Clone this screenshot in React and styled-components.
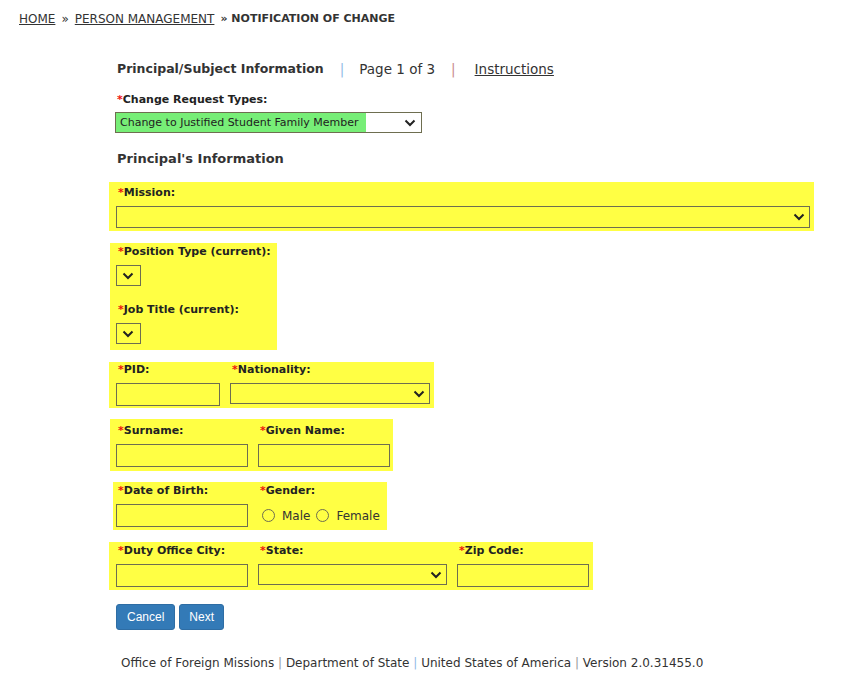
import styled, { createGlobalStyle } from "styled-components";

const GlobalStyle = createGlobalStyle`
  body {
    margin: 0;
    background: #ffffff;
    color: #333333;
    font-family: "DejaVu Sans", Verdana, sans-serif;
  }
`;

const Page = styled.div`
  width: 846px;
  height: 684px;
  overflow: hidden;
`;

const Breadcrumb = styled.div`
  padding: 12px 0 0 19px;
  font-size: 12px;
  line-height: 14px;
  color: #333333;
  display: flex;
  gap: 6px;
`;

const CrumbLink = styled.a`
  color: #333333;
  text-decoration: underline;
`;

const CrumbCurrent = styled.span`
  font-weight: bold;
  font-size: 11px;
`;

const Form = styled.div`
  margin-left: 109px;
  padding-top: 33px;
`;

const TitleRow = styled.div`
  display: flex;
  align-items: center;
  padding-left: 8px;
  font-size: 13.5px;
  line-height: 20px;
`;

const TitleText = styled.span`
  font-weight: bold;
  font-size: 12.5px;
`;

const Sep = styled.span`
  color: ${(p) => p.$color};
  margin: 0 ${(p) => p.$mr}px 0 ${(p) => p.$ml}px;
`;

const InstrLink = styled.a`
  color: #333333;
  text-decoration: underline;
`;

const TypeBlock = styled.div`
  padding: 14px 0 0 6px;
`;

const Label = styled.div`
  font-size: 11px;
  font-weight: bold;
  line-height: 14px;
  color: #222222;
  white-space: nowrap;
  margin-bottom: ${(p) => p.$gap ?? 6}px;
  padding-left: 2px;
`;

const Star = styled.span`
  color: #ee1111;
`;

const SelectWrap = styled.div`
  position: relative;
  width: ${(p) => p.$w}px;
  height: ${(p) => p.$h || 22}px;
  border: 1px solid #6e6e50;
  box-sizing: border-box;
  display: flex;
  align-items: center;
  font-size: 11px;
`;

const Chevron = styled.svg`
  position: absolute;
  right: ${(p) => p.$right || 4}px;
  top: 50%;
  transform: translateY(-50%);
`;

const Highlight = styled.span`
  background: #77ee77;
  align-self: stretch;
  display: flex;
  align-items: center;
  padding-left: 4px;
  width: 246px;
  color: #222222;
`;

const SectionTitle = styled.div`
  font-size: 13px;
  font-weight: bold;
  line-height: 18px;
  padding: 17px 0 0 8px;
  margin-bottom: 14px;
`;

const Block = styled.div`
  background: #ffff44;
  width: ${(p) => p.$w}px;
  box-sizing: border-box;
  margin-left: ${(p) => p.$ml || 0}px;
  padding: ${(p) => p.$pt}px 0 ${(p) => p.$pb}px ${(p) => p.$pl || 7}px;
  margin-bottom: ${(p) => p.$mb ?? 12}px;
`;

const Row = styled.div`
  display: flex;
  gap: 10px;
`;

const Field = styled.div`
  display: flex;
  flex-direction: column;
`;

const Stacked = styled.div`
  margin-top: ${(p) => p.$mt || 0}px;
`;

const Input = styled.input`
  width: ${(p) => p.$w || 132}px;
  height: 23px;
  box-sizing: border-box;
  border: 1px solid #6e6e50;
  background: transparent;
  margin: 0;
  padding: 0 4px;
`;

const RadioRow = styled.div`
  display: flex;
  align-items: center;
  height: 23px;
  font-size: 12px;
  color: #333333;
  padding-left: 4px;
`;

const Radio = styled.span`
  width: 11px;
  height: 11px;
  border: 1px solid #6e6e50;
  border-radius: 50%;
  margin-right: 7px;
  margin-left: ${(p) => p.$ml || 0}px;
`;

const Buttons = styled.div`
  display: flex;
  gap: 4px;
  padding: 2px 0 0 7px;
`;

const Button = styled.button`
  background: #337ab7;
  border: 1px solid #2e6da4;
  border-radius: 3px;
  color: #ffffff;
  font-family: "Liberation Sans", Arial, sans-serif;
  font-size: 12px;
  height: 26px;
  padding: 0 ${(p) => p.$px || 9}px;
  margin: 0;
`;

const Footer = styled.div`
  padding: 26px 0 0 121px;
  font-size: 12px;
  line-height: 14px;
  color: #333333;
  white-space: nowrap;
`;

const FootSep = styled.span`
  color: ${(p) => p.$color || "#999999"};
`;

function ChevronIcon({ right }) {
  return (
    <Chevron $right={right} width="12" height="8" viewBox="0 0 12 8">
      <path d="M1.5 1.5 L6 6 L10.5 1.5" fill="none" stroke="#222" strokeWidth="2" />
    </Chevron>
  );
}

function Req({ children, gap }) {
  return (
    <Label $gap={gap}>
      <Star>*</Star>
      {children}
    </Label>
  );
}

function App() {
  return (
    <Page>
      <GlobalStyle />
      <Breadcrumb>
        <CrumbLink>HOME</CrumbLink>
        <span>»</span>
        <CrumbLink>PERSON MANAGEMENT</CrumbLink>
        <CrumbCurrent>» NOTIFICATION OF CHANGE</CrumbCurrent>
      </Breadcrumb>
      <Form>
        <TitleRow>
          <TitleText>Principal/Subject Information</TitleText>
          <Sep $color="#8fbbe6" $ml={16} $mr={15}>|</Sep>
          <span>Page 1 of 3</span>
          <Sep $color="#c98a8a" $ml={16} $mr={19}>|</Sep>
          <InstrLink>Instructions</InstrLink>
        </TitleRow>
        <TypeBlock>
          <Req gap={5}>Change Request Types:</Req>
          <SelectWrap $w={307} $h={21}>
            <Highlight>Change to Justified Student Family Member</Highlight>
            <ChevronIcon right={5} />
          </SelectWrap>
        </TypeBlock>
        <SectionTitle>Principal's Information</SectionTitle>

        <Block $w={705} $pt={4} $pb={3}>
          <Req>Mission:</Req>
          <SelectWrap $w={694} $h={22}>
            <ChevronIcon right={4} />
          </SelectWrap>
        </Block>

        <Block $w={167} $ml={1} $pl={6} $pt={2} $pb={6}>
          <Req>Position Type (current):</Req>
          <SelectWrap $w={25} $h={21}>
            <ChevronIcon right={6} />
          </SelectWrap>
          <Stacked $mt={17}>
            <Req>Job Title (current):</Req>
            <SelectWrap $w={25} $h={21}>
              <ChevronIcon right={6} />
            </SelectWrap>
          </Stacked>
        </Block>

        <Block $w={325} $pt={1} $pb={2} $mb={11}>
          <Row>
            <Field>
              <Req>PID:</Req>
              <Input $w={104} />
            </Field>
            <Field>
              <Req>Nationality:</Req>
              <SelectWrap $w={200} $h={21}>
                <ChevronIcon right={4} />
              </SelectWrap>
            </Field>
          </Row>
        </Block>

        <Block $w={283} $ml={1} $pl={6} $pt={5} $pb={4} $mb={11}>
          <Row>
            <Field>
              <Req>Surname:</Req>
              <Input />
            </Field>
            <Field>
              <Req>Given Name:</Req>
              <Input />
            </Field>
          </Row>
        </Block>

        <Block $w={274} $ml={4} $pl={3} $pt={2} $pb={3}>
          <Row>
            <Field>
              <Req>Date of Birth:</Req>
              <Input />
            </Field>
            <Field>
              <Req>Gender:</Req>
              <RadioRow>
                <Radio />
                Male
                <Radio $ml={6} />
                Female
              </RadioRow>
            </Field>
          </Row>
        </Block>

        <Block $w={484} $pt={2} $pb={3}>
          <Row>
            <Field>
              <Req>Duty Office City:</Req>
              <Input />
            </Field>
            <Field>
              <Req>State:</Req>
              <SelectWrap $w={189} $h={21}>
                <ChevronIcon right={4} />
              </SelectWrap>
            </Field>
            <Field>
              <Req>Zip Code:</Req>
              <Input />
            </Field>
          </Row>
        </Block>

        <Buttons>
          <Button $px={10}>Cancel</Button>
          <Button $px={9}>Next</Button>
        </Buttons>
      </Form>
      <Footer>
        Office of Foreign Missions <FootSep>|</FootSep> Department of State{" "}
        <FootSep $color="#8fbbe6">|</FootSep> United States of America{" "}
        <FootSep>|</FootSep> Version 2.0.31455.0
      </Footer>
    </Page>
  );
}

export default App;
